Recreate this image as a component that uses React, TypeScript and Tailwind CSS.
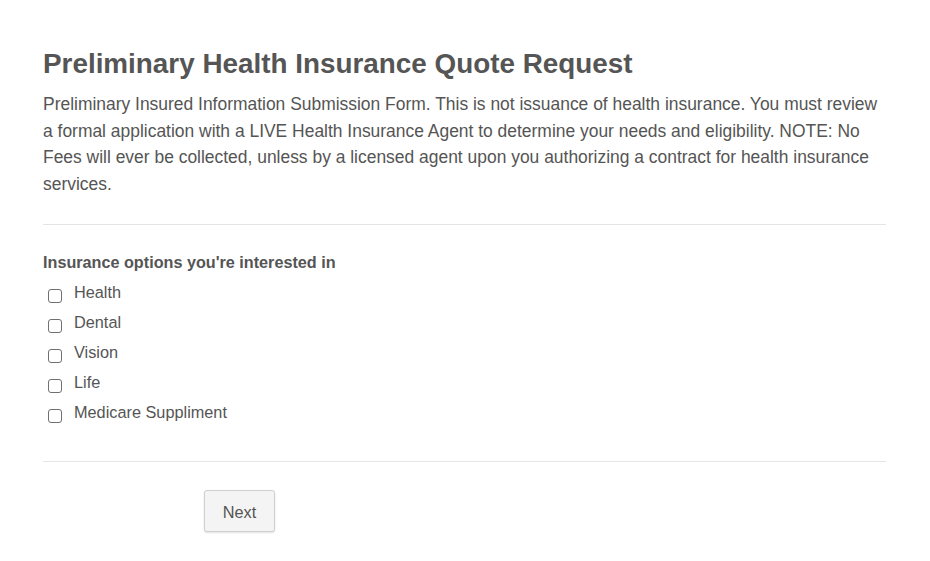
import React from 'react';

const OPTIONS = ['Health', 'Dental', 'Vision', 'Life', 'Medicare Suppliment'];

export default function App() {
  return (
    <div className="min-h-screen bg-white text-[#555555]" style={{ fontFamily: '"Liberation Sans", Arial, sans-serif' }}>
      <div className="w-[843px] ml-[43px] pt-[46px]">
        {/* Header */}
        <h1 className="text-[27.85px] leading-[36px] font-bold text-[#555555]">
          Preliminary Health Insurance Quote Request
        </h1>
        <p className="text-[17.45px] leading-[26.5px] mt-[9px]">
          Preliminary Insured Information Submission Form. This is not issuance of health insurance. You must review a formal application with a LIVE Health Insurance Agent to determine your needs and eligibility. NOTE: No Fees will ever be collected, unless by a licensed agent upon you authorizing a contract for health insurance services.
        </p>

        <hr className="mt-[27px] border-t border-[#e5e5e5]" />

        {/* Options */}
        <div className="pt-[27px] pb-[32px]">
          <div className="text-[16.2px] leading-[20px] font-bold">Insurance options you're interested in</div>
          <div className="mt-[7px] flex flex-col">
            {OPTIONS.map((opt) => (
              <label key={opt} className="flex items-center h-[30px]">
                <input
                  type="checkbox"
                  className="appearance-none w-[14px] h-[14px] ml-[5px] mr-[12px] mt-[3px] border border-[#707070] rounded-[3px] bg-white"
                />
                <span className="text-[16.3px] leading-[20px] -mt-[4px]">{opt}</span>
              </label>
            ))}
          </div>
        </div>

        <hr className="border-t border-[#e5e5e5]" />

        <div className="pt-[28px] pl-[161px]">
          <button className="w-[71px] h-[42px] pt-[2px] bg-[#f4f4f4] border border-[#cfcfcf] rounded-[3px] shadow-[0_1px_2px_rgba(0,0,0,0.12)] text-[16.3px] text-[#555555]">
            Next
          </button>
        </div>
      </div>
    </div>
  );
}
